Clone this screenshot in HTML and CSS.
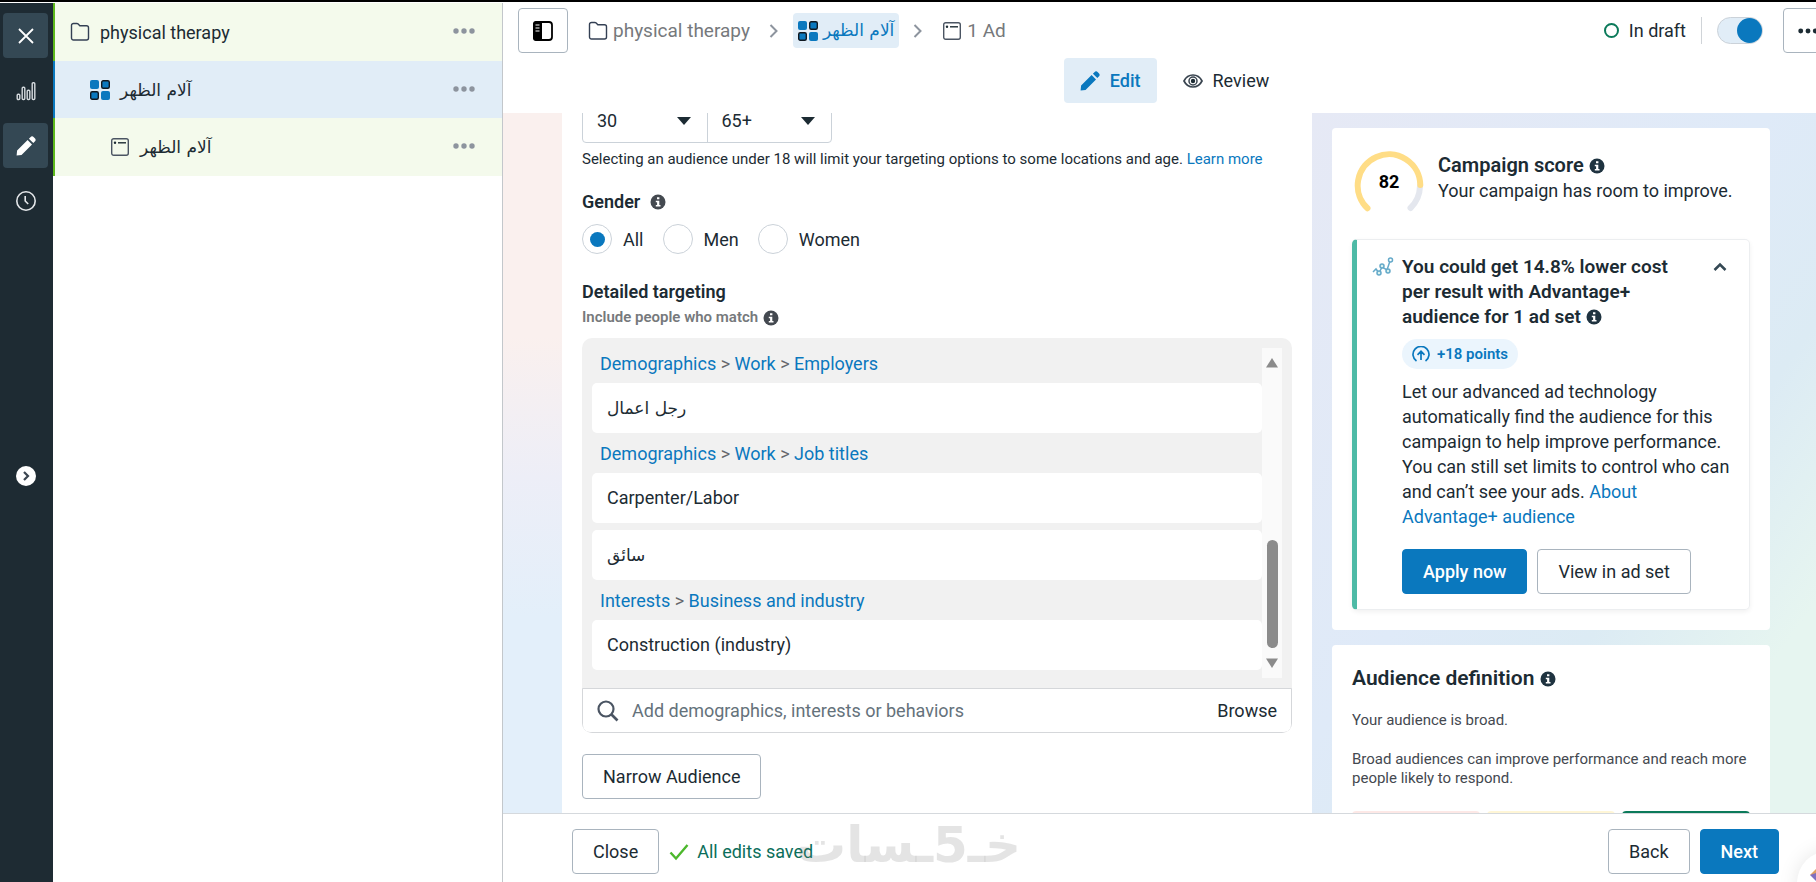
FILE: index.html
```html
<!DOCTYPE html>
<html lang="en">
<head>
    <meta charset="UTF-8">
    <meta name="viewport" content="width=device-width, initial-scale=1.0">
    <title>Ads Manager - Edit ad set</title>
    <link rel="stylesheet" href="styles.css">
</head>
<body>
    <!-- shared icons -->
    <svg class="defs" width="0" height="0" aria-hidden="true">
        <symbol id="i-folder" viewBox="0 0 20 20">
            <path d="M1.5 16V3.5a2 2 0 0 1 2-2h3.3a2 2 0 0 1 1.4.6l1.6 1.7h6.7a2 2 0 0 1 2 2V16a2 2 0 0 1-2 2h-13a2 2 0 0 1-2-2z" fill="none" stroke="#344054" stroke-width="1.4"/>
        </symbol>
        <symbol id="i-grid" viewBox="0 0 20 20">
            <rect x="0" y="0" width="9" height="9" rx="2" fill="#0a78be"/>
            <rect x="11.7" y=".7" width="7.6" height="7.6" rx="1.5" fill="#0a78be" stroke="#101820" stroke-width="1.4"/>
            <rect x=".7" y="11.7" width="7.6" height="7.6" rx="1.5" fill="#0a78be" stroke="#101820" stroke-width="1.4"/>
            <rect x="11" y="11" width="9" height="9" rx="2" fill="#0a78be"/>
        </symbol>
        <symbol id="i-ad" viewBox="0 0 20 20">
            <rect x="1.7" y="1.7" width="16.6" height="16.6" rx="2" fill="none" stroke="#4b5563" stroke-width="1.4"/>
            <circle cx="5" cy="5.8" r="1.2" fill="#1c2b33"/>
            <path d="M8 5.8h8" stroke="#1c2b33" stroke-width="1.4"/>
        </symbol>
        <symbol id="i-pencil" viewBox="0 0 20 20">
            <path d="M.6 19.4l.5-4.9L11.6 4l4.4 4.4L5.5 18.9zM12.9 2.7l1.5-1.5a2.4 2.4 0 0 1 3.4 0l1 1a2.4 2.4 0 0 1 0 3.4l-1.5 1.5z" fill="currentColor"/>
        </symbol>
        <symbol id="i-dots" viewBox="0 0 22 6">
            <circle cx="3" cy="3" r="2.7" fill="currentColor"/>
            <circle cx="11" cy="3" r="2.7" fill="currentColor"/>
            <circle cx="19" cy="3" r="2.7" fill="currentColor"/>
        </symbol>
        <symbol id="i-info" viewBox="0 0 16 16">
            <circle cx="8" cy="8" r="7.5" fill="currentColor"/>
            <path d="M7 3.2h2.4v2H7zM5.8 6.7h3.5v4.4h1.2v1.5H5.8v-1.5h1.3V8.2H5.8z" fill="#fff"/>
        </symbol>
        <symbol id="i-chevron" viewBox="0 0 10 16">
            <path d="M1.5 2l6 6-6 6" fill="none" stroke="#8d949e" stroke-width="2"/>
        </symbol>
    </svg>

    <div class="app">
        <nav class="rail">
            <button class="rail-btn active" aria-label="Close">
                <svg width="18" height="18" viewBox="0 0 18 18"><path d="M2 2l14 14M16 2L2 16" stroke="#fff" stroke-width="1.8"/></svg>
            </button>
            <button class="rail-btn" aria-label="Charts">
                <svg width="20" height="20" viewBox="0 0 20 20" fill="none" stroke="#d5dade" stroke-width="1.4"><rect x="1.2" y="13.2" width="2.6" height="5.3" rx="1"/><rect x="6.2" y="6.2" width="2.6" height="12.3" rx="1"/><rect x="11.2" y="9.2" width="2.6" height="9.3" rx="1"/><rect x="16.2" y="1.8" width="2.6" height="16.7" rx="1"/></svg>
            </button>
            <button class="rail-btn active" aria-label="Edit">
                <svg width="20" height="20"><use href="#i-pencil"/></svg>
            </button>
            <button class="rail-btn" aria-label="History">
                <svg width="22" height="22" viewBox="0 0 22 22" fill="none" stroke="#e4e7ea" stroke-width="1.6"><circle cx="11" cy="11" r="9.2"/><path d="M10.2 6v5l3 3"/></svg>
            </button>
            <button class="rail-expand" aria-label="Expand">
                <svg width="20" height="20" viewBox="0 0 20 20"><circle cx="10" cy="10" r="10" fill="#fff"/><path d="M8 6l4 4-4 4" fill="none" stroke="#3a4550" stroke-width="2.2"/></svg>
            </button>
        </nav>

        <aside class="tree">
            <div class="tree-row">
                <svg width="20" height="20"><use href="#i-folder"/></svg>
                <span class="tree-name">physical therapy</span>
                <button class="more" aria-label="More options"><svg width="22" height="6"><use href="#i-dots"/></svg></button>
            </div>
            <div class="tree-row level-2 selected">
                <svg width="20" height="20"><use href="#i-grid"/></svg>
                <span class="tree-name ar" lang="ar">آلام الظهر</span>
                <button class="more" aria-label="More options"><svg width="22" height="6"><use href="#i-dots"/></svg></button>
            </div>
            <div class="tree-row level-3">
                <svg width="20" height="20"><use href="#i-ad"/></svg>
                <span class="tree-name ar" lang="ar">آلام الظهر</span>
                <button class="more" aria-label="More options"><svg width="22" height="6"><use href="#i-dots"/></svg></button>
            </div>
        </aside>

        <main class="editor">
            <header class="header">
                <div class="header-top">
                    <button class="btn panel-btn" aria-label="Toggle panel">
                        <svg width="20" height="20" viewBox="0 0 20 20"><rect x="1" y="1" width="18" height="18" rx="3" fill="#fff" stroke="#000" stroke-width="1.8"/><path d="M3 0h6v20H3a3 3 0 0 1-3-3V3a3 3 0 0 1 3-3z"/><path d="M2.5 4h4M2.5 7h4M2.5 10h4" stroke="#fff" stroke-width="1.2"/></svg>
                    </button>
                    <div class="crumbs">
                        <a href="#" class="crumb"><svg width="20" height="20"><use href="#i-folder"/></svg>physical therapy</a>
                        <svg width="10" height="16"><use href="#i-chevron"/></svg>
                        <a href="#" class="crumb current ar" lang="ar"><svg width="20" height="20"><use href="#i-grid"/></svg>آلام الظهر</a>
                        <svg width="10" height="16"><use href="#i-chevron"/></svg>
                        <a href="#" class="crumb"><svg width="20" height="20"><use href="#i-ad"/></svg>1 Ad</a>
                    </div>
                    <span class="status"><i class="status-ring"></i>In draft</span>
                    <input type="checkbox" class="toggle" aria-label="Ad set on" checked>
                    <button class="btn overflow-btn" aria-label="More"><svg width="20" height="6"><use href="#i-dots"/></svg></button>
                </div>
                <div class="tabs">
                    <button class="tab active"><svg width="20" height="20"><use href="#i-pencil"/></svg>Edit</button>
                    <button class="tab">
                        <svg width="20" height="14" viewBox="0 0 20 14"><path d="M1 7c2-4 5.2-6 9-6s7 2 9 6c-2 4-5.2 6-9 6s-7-2-9-6z" fill="none" stroke="#3a4550" stroke-width="1.7"/><circle cx="10" cy="7" r="4" fill="none" stroke="#3a4550" stroke-width="1.5"/><circle cx="10" cy="7" r="2.2" fill="#1c2b33"/></svg>
                        Review
                    </button>
                </div>
            </header>

            <div class="workspace">
                <section class="form">
                    <div class="age">
                        <div class="select"><select aria-label="Minimum age"><option>30</option></select></div>
                        <div class="select"><select aria-label="Maximum age"><option>65+</option></select></div>
                    </div>
                    <p class="hint">Selecting an audience under 18 will limit your targeting options to some locations and age. <a href="#">Learn more</a></p>

                    <h2>Gender <svg class="info" width="16" height="16"><use href="#i-info"/></svg></h2>
                    <div class="radios">
                        <input type="radio" name="gender" id="g-all" checked><label for="g-all">All</label>
                        <input type="radio" name="gender" id="g-men"><label for="g-men">Men</label>
                        <input type="radio" name="gender" id="g-women"><label for="g-women">Women</label>
                    </div>

                    <h2>Detailed targeting</h2>
                    <p class="include">Include people who match <svg class="info" width="16" height="16"><use href="#i-info"/></svg></p>

                    <div class="targeting">
                        <div class="targeting-list">
                            <div class="groups">
                                <div class="path"><a href="#">Demographics</a> <span>&gt;</span> <a href="#">Work</a> <span>&gt;</span> <a href="#">Employers</a></div>
                                <div class="item ar" lang="ar">رجل اعمال</div>
                                <div class="path"><a href="#">Demographics</a> <span>&gt;</span> <a href="#">Work</a> <span>&gt;</span> <a href="#">Job titles</a></div>
                                <div class="item">Carpenter/Labor</div>
                                <div class="item ar" lang="ar">سائق</div>
                                <div class="path"><a href="#">Interests</a> <span>&gt;</span> <a href="#">Business and industry</a></div>
                                <div class="item">Construction (industry)</div>
                            </div>
                            <div class="scrollbar">
                                <svg width="12" height="10" viewBox="0 0 12 10"><path d="M6 0l6 9.5H0z" fill="#8b8b8b"/></svg>
                                <div class="thumb"></div>
                                <svg width="12" height="10" viewBox="0 0 12 10"><path d="M6 10L0 .5h12z" fill="#8b8b8b"/></svg>
                            </div>
                        </div>
                        <div class="search">
                            <svg width="22" height="22" viewBox="0 0 22 22"><circle cx="9" cy="9" r="7.5" fill="none" stroke="#4b5563" stroke-width="2.2"/><path d="M14.5 14.5l6 6" stroke="#4b5563" stroke-width="2.6"/></svg>
                            <input type="text" aria-label="Add targeting" placeholder="Add demographics, interests or behaviors">
                            <button>Browse</button>
                        </div>
                    </div>
                    <button class="btn">Narrow Audience</button>
                </section>

                <aside class="side">
                    <section class="card">
                        <div class="score">
                            <div class="ring">
                                <svg width="70" height="64" viewBox="0 0 70 64" fill="none" stroke-width="6" stroke-linecap="round"><path d="M66 35a31.5 31.5 0 0 1-9.5 22" stroke="#e4e7ee"/><path d="M13.5 57.3A31.3 31.3 0 1 1 66.3 34" stroke="#ffdd86"/></svg>
                                <span>82</span>
                            </div>
                            <div class="score-text">
                                <h3>Campaign score <svg class="info" width="16" height="16"><use href="#i-info"/></svg></h3>
                                <p>Your campaign has room to improve.</p>
                            </div>
                        </div>
                        <div class="tip">
                            <svg class="tip-icon" width="22" height="20" viewBox="0 0 22 20" fill="none" stroke="#64a9c9" stroke-width="1.5"><path d="M1 15l3-3 3 4 3-6 5 3 3-9"/><circle cx="7" cy="16" r="2" fill="#d9f2ee"/><circle cx="10" cy="9" r="2" fill="#d9f2ee"/><circle cx="16" cy="14" r="2" fill="#d9f2ee"/><circle cx="18.5" cy="3" r="2" fill="#fff"/></svg>
                            <div class="tip-body">
                                <h4>You could get 14.8% lower cost per result with Advantage+ audience for 1 ad set <svg class="info" width="16" height="16"><use href="#i-info"/></svg></h4>
                                <span class="points"><svg width="18" height="16" viewBox="0 0 18 16" fill="none" stroke="#0a78be" stroke-width="1.7"><path d="M4.5 15A8 8 0 1 1 13.5 15M9 14V5.5M5.5 8.8L9 5.3l3.5 3.5"/></svg>+18 points</span>
                                <p>Let our advanced ad technology automatically find the audience for this campaign to help improve performance. You can still set limits to control who can and can’t see your ads. <a href="#">About Advantage+ audience</a></p>
                                <div class="actions">
                                    <button class="btn primary">Apply now</button>
                                    <button class="btn">View in ad set</button>
                                </div>
                            </div>
                            <button class="collapse" aria-label="Collapse"><svg width="14" height="10" viewBox="0 0 14 10"><path d="M1.5 8L7 2.5 12.5 8" fill="none" stroke="#344854" stroke-width="2.5"/></svg></button>
                        </div>
                    </section>
                    <section class="card audience">
                        <h3>Audience definition <svg class="info" width="16" height="16"><use href="#i-info"/></svg></h3>
                        <p>Your audience is broad.</p>
                        <p>Broad audiences can improve performance and reach more people likely to respond.</p>
                        <div class="meter"><i></i><i></i><i></i></div>
                    </section>
                </aside>
            </div>

            <footer class="footer">
                <button class="btn">Close</button>
                <span class="saved">
                    <svg width="20" height="18" viewBox="0 0 20 18"><path d="M1.5 9.5l5.5 6L18.5 2" fill="none" stroke="#4cb82c" stroke-width="2.4"/></svg>
                    All edits saved
                </span>
                <button class="btn back">Back</button>
                <button class="btn primary">Next</button>
                <span class="watermark" lang="ar" dir="rtl">خـ5ـسات</span>
                <span class="bubble"><svg width="20" height="24" viewBox="0 0 20 24"><path d="M1 12L10 3v9z" fill="#e0a060"/><path d="M1 12l9-3v12z" fill="#8070c0"/></svg></span>
            </footer>
        </main>
    </div>
</body>
</html>
```
FILE: styles.css
```css
* {
    box-sizing: border-box;
}
body {
    margin: 0;
    height: 100vh;
    overflow: hidden;
    border-top: 2px solid #000;
    font-family: Roboto, "Noto Sans", sans-serif;
    font-size: 18px;
    line-height: 25px;
    color: #1c2b33;
    background: #fff;
}
h2, h3, h4, p {
    margin: 0;
}
a {
    color: #0a78be;
    text-decoration: none;
}
svg {
    flex-shrink: 0;
}
button {
    font: inherit;
    color: inherit;
    background: none;
    border: 0;
    padding: 0;
    cursor: pointer;
}
.ar {
    font-family: "DejaVu Sans", sans-serif;
    font-size: 17px;
}
.defs {
    position: absolute;
}
.app {
    display: flex;
    height: 100%;
    padding-top: 1px;
}

/* dark rail */
.rail {
    width: 53px;
    padding: 10px 5px 0 3px;
    background: #1e2b33;
    display: flex;
    flex-direction: column;
    gap: 10px;
}
.rail-btn {
    height: 45px;
    border-radius: 4px;
    color: #fff;
    display: grid;
    place-items: center;
}
.rail-btn.active {
    background: #344854;
}
.rail-expand {
    margin-top: 233px;
    display: grid;
    place-items: center;
}

/* campaign tree */
.tree {
    width: 450px;
    border-right: 1px solid #c3c7cb;
}
.tree-row {
    height: 58px;
    display: flex;
    align-items: center;
    gap: 10px;
    padding: 0 27px 0 15px;
    border-left: 2px solid #5db81c;
    background: #f4faec;
}
.tree-row.level-2 {
    height: 57px;
    padding-left: 35px;
}
.tree-row.level-3 {
    padding-left: 55px;
}
.tree-row.selected {
    border-left-color: #0a78be;
    background: #e1edf7;
}
.tree-name {
    flex: 1;
    padding-top: 1px;
}
.more {
    margin-bottom: 2px;
    color: #8d949e;
    display: flex;
}

/* editor */
.editor {
    flex: 1;
    min-width: 0;
    display: flex;
    flex-direction: column;
}
.header {
    height: 110px;
    padding-top: 5px;
}
.header-top {
    display: flex;
    align-items: center;
    overflow: hidden;
    padding-left: 15px;
}
.btn {
    height: 45px;
    padding: 0 20px;
    border: 1px solid #a9b4be;
    border-radius: 4px;
    background: #fff;
    white-space: nowrap;
}
.btn.primary {
    background: #0a78be;
    border-color: #0a78be;
    color: #fff;
    font-weight: 500;
}
.btn.panel-btn {
    width: 50px;
    padding: 0;
    display: grid;
    place-items: center;
}
.crumbs {
    flex: 1;
    display: flex;
    align-items: center;
    gap: 14px;
    margin-left: 15px;
    font-size: 19px;
}
.crumb {
    display: flex;
    align-items: center;
    gap: 5px;
    height: 35px;
    padding: 0 5px;
    color: #76797c;
}
.crumb.current {
    background: #e1edf7;
    border-radius: 4px;
    color: #0a78be;
}
.status {
    display: flex;
    align-items: center;
    gap: 10px;
    height: 27px;
    padding-right: 15px;
    border-right: 1px solid #d0d4d8;
}
.status-ring {
    width: 15px;
    height: 15px;
    border: 2px solid #0b7a5a;
    border-radius: 50%;
}
.toggle {
    appearance: none;
    width: 46px;
    height: 27px;
    margin: 0 20px 0 15px;
    border: 1px solid #cbd2d9;
    border-radius: 14px;
    background: #e1edf7;
    display: flex;
    justify-content: flex-end;
}
.toggle::before {
    content: "";
    width: 25px;
    height: 25px;
    border-radius: 50%;
    background: #0a78be;
}
.btn.overflow-btn {
    width: 50px;
    padding: 0;
    margin-right: -17px;
    display: grid;
    place-items: center;
}
.tabs {
    display: flex;
    justify-content: center;
    gap: 10px;
    padding: 5px 0 5px 30px;
}
.tab {
    height: 45px;
    display: flex;
    align-items: center;
    gap: 10px;
    padding: 0 16px;
    border-radius: 4px;
}
.tab.active {
    background: #e1edf7;
    color: #0a78be;
    font-weight: 500;
}

.workspace {
    flex: 1;
    min-height: 0;
    overflow: hidden;
    display: flex;
    align-items: flex-start;
    padding-left: 59px;
    background: linear-gradient(#faf0ee 0%, #faf0ee 32%, #edeef7 52%, #e3effa 72%, #e3effa 100%);
}
.form {
    flex: 0 1 750px;
    margin-top: -15px;
    padding: 0 20px 40px;
    background: #fff;
}
.age {
    display: flex;
    width: 250px;
    border: 1px solid #cbd2d9;
    border-radius: 4px;
}
.select {
    position: relative;
    flex: 1;
}
.select + .select {
    border-left: 1px solid #cbd2d9;
}
.select::after {
    content: "";
    position: absolute;
    right: 16px;
    top: 18px;
    border: 7px solid transparent;
    border-top: 8px solid #1c2b33;
    border-bottom: 0;
    pointer-events: none;
}
.select select {
    width: 100%;
    height: 43px;
    padding: 0 14px;
    border: 0;
    appearance: none;
    font: inherit;
    color: inherit;
    background: transparent;
}
.hint {
    padding-top: 4px;
    font-size: 15px;
}
h2 {
    margin-top: 17px;
    font-size: 18px;
    font-weight: 600;
    display: flex;
    align-items: center;
    gap: 10px;
}
.info {
    color: #1f3340;
    vertical-align: -2px;
}
h2 .info, .include .info {
    color: #444950;
}
.radios {
    display: flex;
    align-items: center;
    padding-top: 10px;
    padding-bottom: 8px;
}
.radios input {
    appearance: none;
    width: 30px;
    height: 30px;
    margin: 0 11px 0 0;
    border: 1px solid #cbd2d9;
    border-radius: 50%;
    display: grid;
    place-items: center;
}
.radios input:checked::before {
    content: "";
    width: 15px;
    height: 15px;
    border-radius: 50%;
    background: #0a78be;
}
.radios label {
    margin-right: 19px;
}
.include {
    display: flex;
    align-items: center;
    gap: 5px;
    padding-top: 1px;
    font-size: 15px;
    font-weight: 600;
    color: #76797c;
}
.targeting {
    margin: 8px 0 21px;
    border-radius: 10px;
    overflow: hidden;
    background: #f1f1f1;
}
.targeting-list {
    display: flex;
    padding: 10px;
}
.groups {
    flex: 1;
    padding-bottom: 8px;
}
.path {
    height: 40px;
    padding: 8px 8px 0;
}
.path:first-child {
    height: 35px;
    padding-top: 3px;
}
.path span {
    color: #65676b;
}
.item {
    height: 50px;
    padding: 0 15px;
    line-height: 50px;
    border-radius: 5px;
    background: #fff;
}
.item + .item {
    margin-top: 7px;
}
.scrollbar {
    width: 20px;
    padding: 10px 4px;
    background: #fafafa;
    display: flex;
    flex-direction: column;
    align-items: center;
}
.thumb {
    width: 11px;
    height: 108px;
    margin: auto 0 10px;
    border-radius: 6px;
    background: #8b8b8b;
}
.search {
    height: 45px;
    display: flex;
    align-items: center;
    gap: 13px;
    padding: 0 14px;
    border: 1px solid #d5d7da;
    border-radius: 0 0 8px 8px;
    background: #fff;
}
.search input {
    flex: 1;
    min-width: 0;
    padding: 0;
    border: 0;
    outline: 0;
    font: inherit;
    color: #1c2b33;
}
.search input::placeholder {
    color: #65727b;
    opacity: 1;
}

/* right column */
.side {
    flex: 1;
    align-self: stretch;
    padding: 15px 46px 0 20px;
    background: linear-gradient(to bottom right, #e6e9f5 0%, #dfeaf8 45%, #dcebf4 65%, #e6f5f0 85%);
}
.card {
    margin-bottom: 15px;
    padding: 20px;
    border-radius: 4px;
    background: #fff;
}
.score {
    display: flex;
    gap: 14px;
    padding: 3px 2px 0;
    margin-bottom: 20px;
}
.score-text {
    padding-top: 2px;
}
.ring {
    position: relative;
    height: 68px;
}
.ring span {
    position: absolute;
    inset: 0;
    padding-top: 18px;
    text-align: center;
    font-weight: 700;
    color: #000;
}
h3 {
    font-size: 20px;
    font-weight: 600;
}
.tip {
    display: flex;
    padding: 14px 22px 15px 15px;
    border: 1px solid #eceef0;
    border-left: 5px solid #4dbaa6;
    border-radius: 5px;
    box-shadow: 0 2px 5px rgba(0, 0, 0, 0.06);
}
.tip-icon {
    margin-top: 3px;
}
.tip-body {
    flex: 1;
    padding-left: 8px;
    margin-right: -24px;
}
h4 {
    font-size: 19px;
    font-weight: 600;
    max-width: 290px;
}
.points {
    display: inline-flex;
    align-items: center;
    gap: 7px;
    height: 30px;
    margin: 10px 0;
    padding: 0 10px;
    border-radius: 15px;
    background: #ebf5fd;
    color: #0a78be;
    font-size: 15px;
    font-weight: 600;
}
.actions {
    display: flex;
    gap: 10px;
    padding-top: 20px;
}
.collapse {
    align-self: flex-start;
    display: flex;
    padding-top: 8px;
}
.audience h3 {
    margin-bottom: 20px;
    font-size: 21px;
    line-height: 26px;
}
.audience p {
    margin-bottom: 20px;
    font-size: 15px;
    line-height: 19px;
    color: #444950;
}
.meter {
    display: grid;
    grid-template-columns: repeat(3, 1fr);
    gap: 7px;
    padding-top: 3px;
}
.meter i {
    height: 20px;
    border-radius: 4px;
    background: #fde8e6;
}
.meter i:nth-child(2) {
    background: #fff6d6;
}
.meter i:nth-child(3) {
    background: #0b7a5a;
}

/* bottom bar */
.footer {
    position: relative;
    height: 69px;
    display: flex;
    align-items: center;
    gap: 10px;
    padding: 7px 37px 0 69px;
    border-top: 1px solid #d5d9dd;
    background: #fff;
    overflow: hidden;
}
.saved {
    display: flex;
    align-items: center;
    gap: 8px;
    color: #0b6e5a;
}
.back {
    margin-left: auto;
}
.watermark {
    position: absolute;
    left: 293px;
    top: 6px;
    font: bold 50px/50px "DejaVu Sans", sans-serif;
    color: rgba(120, 120, 120, 0.2);
}
.bubble {
    position: absolute;
    right: -45px;
    top: 37px;
    width: 64px;
    height: 64px;
    padding: 12px;
    border-radius: 50%;
    background: #fff;
    box-shadow: 0 0 20px rgba(0, 0, 0, 0.1);
}
```
